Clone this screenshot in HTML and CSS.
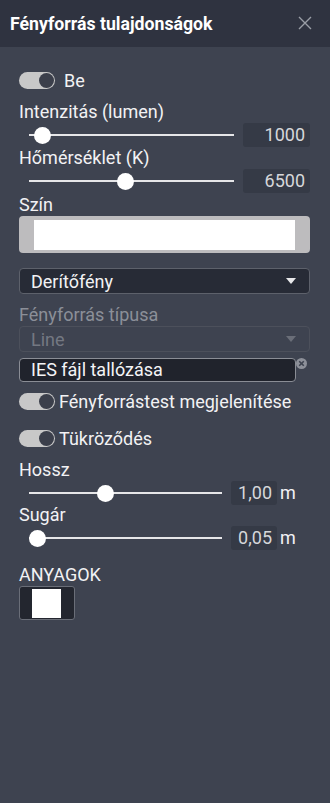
FILE: index.html
```html
<!DOCTYPE html>
<html lang="hu">
<head>
<meta charset="utf-8">
<title>Fényforrás tulajdonságok</title>
<link rel="stylesheet" href="styles.css">
</head>
<body>
<div class="panel">
  <header class="head">
    <h1 class="title">Fényforrás tulajdonságok</h1>
    <svg class="close" width="14" height="14" viewBox="0 0 14 14"><path d="M1 1L13 13M13 1L1 13" stroke="#9a9ea6" stroke-width="1.4" fill="none"/></svg>
  </header>
  <main class="body">
    <div class="toggle-row first">
      <span class="toggle"><span class="knob"></span></span>
      <span class="toggle-label gap8">Be</span>
    </div>

    <div class="label l-int">Intenzitás (lumen)</div>
    <div class="slider-row">
      <div class="slider"><div class="track"></div><span class="thumb" style="left:13px"></span></div>
      <div class="numbox wide">1000</div>
    </div>

    <div class="label l-temp">Hőmérséklet (K)</div>
    <div class="slider-row">
      <div class="slider"><div class="track"></div><span class="thumb" style="left:96px"></span></div>
      <div class="numbox wide">6500</div>
    </div>

    <div class="label l-szin">Szín</div>
    <div class="color-box"><div class="color-inner"></div></div>

    <div class="select">
      <span>Derítőfény</span>
      <svg class="caret" width="10" height="6" viewBox="0 0 10 6"><path d="M0 0H10L5 6Z" fill="#e8e8ea"/></svg>
    </div>

    <div class="label dim l-type">Fényforrás típusa</div>
    <div class="select disabled">
      <span>Line</span>
      <svg class="caret" width="10" height="6" viewBox="0 0 10 6"><path d="M0 0H10L5 6Z" fill="#6a6e78"/></svg>
    </div>

    <div class="file-row">
      <div class="file-input">IES fájl tallózása</div>
      <svg class="clear" width="11" height="11" viewBox="0 0 11 11"><circle cx="5.5" cy="5.5" r="5.5" fill="#8d9099"/><path d="M3.2 3.2L7.8 7.8M7.8 3.2L3.2 7.8" stroke="#3e4350" stroke-width="1.6"/></svg>
    </div>

    <div class="toggle-row t2">
      <span class="toggle"><span class="knob"></span></span>
      <span class="toggle-label">Fényforrástest megjelenítése</span>
    </div>
    <div class="toggle-row t3">
      <span class="toggle"><span class="knob"></span></span>
      <span class="toggle-label">Tükröződés</span>
    </div>

    <div class="label l-hossz">Hossz</div>
    <div class="slider-row">
      <div class="slider short"><div class="track"></div><span class="thumb" style="left:76px"></span></div>
      <div class="numbox">1,00</div><span class="unit">m</span>
    </div>

    <div class="label l-sugar">Sugár</div>
    <div class="slider-row">
      <div class="slider short"><div class="track"></div><span class="thumb" style="left:8px"></span></div>
      <div class="numbox">0,05</div><span class="unit">m</span>
    </div>

    <div class="label l-any">ANYAGOK</div>
    <div class="material"><div class="mat-inner"></div></div>
  </main>
</div>
</body>
</html>
```
FILE: styles.css
```css
* { box-sizing: border-box; }
html, body { margin: 0; padding: 0; }
body {
  width: 330px;
  height: 803px;
  background: #3e4350;
  font-family: Roboto, "Noto Sans", sans-serif;
  color: #f0f0f2;
  overflow: hidden;
}
.panel { display: flex; flex-direction: column; }
.head {
  height: 47px;
  background: #2f3340;
  display: flex;
  align-items: center;
  justify-content: space-between;
  padding: 0 18px 0 10px;
}
.title {
  margin: 0;
  font-size: 17.7px;
  font-weight: 700;
  color: #ffffff;
}
.close { display: block; margin-top: -1px; }
.body {
  display: flex;
  flex-direction: column;
  padding: 0 20px 0 19px;
}
.toggle-row { display: flex; align-items: center; height: 20px; }
.toggle-row.first { margin-top: 23px; }
.toggle {
  position: relative;
  width: 36px;
  height: 17px;
  border-radius: 9px;
  background: #c8c8c8;
  flex: none;
}
.knob {
  position: absolute;
  right: 1px;
  top: 1px;
  width: 15px;
  height: 15px;
  border-radius: 50%;
  background: #3b3f4b;
}
.toggle-label { font-size: 18px; color: #f2f2f4; margin-left: 4px; }
.toggle-label.gap8 { margin-left: 9px; }
.label { font-size: 18px; line-height: 20px; height: 20px; color: #f2f2f4; }
.label.dim { color: #8b8f98; }
.l-int { margin-top: 12px; }
.l-temp { margin-top: 1px; }
.l-szin { margin-top: 2px; }
.l-type { margin-top: 11px; }
.l-hossz { margin-top: 12px; }
.l-sugar { margin-top: 0; }
.l-any { margin-top: 15px; }
.slider-row { display: flex; align-items: center; height: 25px; }
.slider {
  position: relative;
  width: 205px;
  height: 20px;
  margin-left: 10px;
  margin-right: 9px;
  flex: none;
}
.slider.short { width: 193px; }
.track {
  position: absolute;
  left: 0; right: 0;
  top: 9px;
  height: 2px;
  background: #e6e6e8;
}
.thumb {
  position: absolute;
  top: 2px;
  width: 17px;
  height: 17px;
  margin-left: -8px;
  border-radius: 50%;
  background: #ffffff;
}
.numbox {
  height: 24px;
  width: 46px;
  border-radius: 3px;
  background: #353a46;
  color: #d6d7da;
  font-size: 18px;
  line-height: 24px;
  text-align: right;
  padding-right: 5px;
  white-space: nowrap;
}
.numbox.wide { width: 67px; padding-right: 5px; }
.unit { font-size: 18px; margin-left: 3px; color: #f2f2f4; }
.color-box {
  margin-top: 1px;
  height: 37px;
  border-radius: 4px;
  background: #bdbcbe;
  padding: 4px 15px 3px 15px;
}
.color-inner { height: 100%; background: #ffffff; }
.select {
  margin-top: 15px;
  height: 26px;
  border: 1px solid #5d616b;
  border-radius: 4px;
  background: #272b36;
  display: flex;
  align-items: center;
  justify-content: space-between;
  padding: 0 13px 0 11px;
  font-size: 18px;
  color: #f2f2f4;
}
.select.disabled {
  margin-top: 1px;
  background: #3e4350;
  border-color: #4c505b;
  color: #747882;
}
.file-row { display: flex; align-items: flex-start; margin-top: 6px; }
.file-input {
  width: 277px;
  height: 24px;
  border: 1px solid #8a8d95;
  border-radius: 4px;
  background: #20232c;
  font-size: 18px;
  line-height: 22px;
  padding-left: 11px;
  color: #f4f4f6;
}
.clear { display: block; }
.toggle-row.t2 { margin-top: 9px; }
.toggle-row.t3 { margin-top: 17px; }
.material {
  margin-top: 1px;
  width: 56px;
  height: 34px;
  border: 1px solid #6a6e78;
  border-radius: 3px;
  background: #23262f;
  padding: 2px 0 0 12px;
}
.mat-inner { width: 29px; height: 29px; background: #ffffff; }
```
